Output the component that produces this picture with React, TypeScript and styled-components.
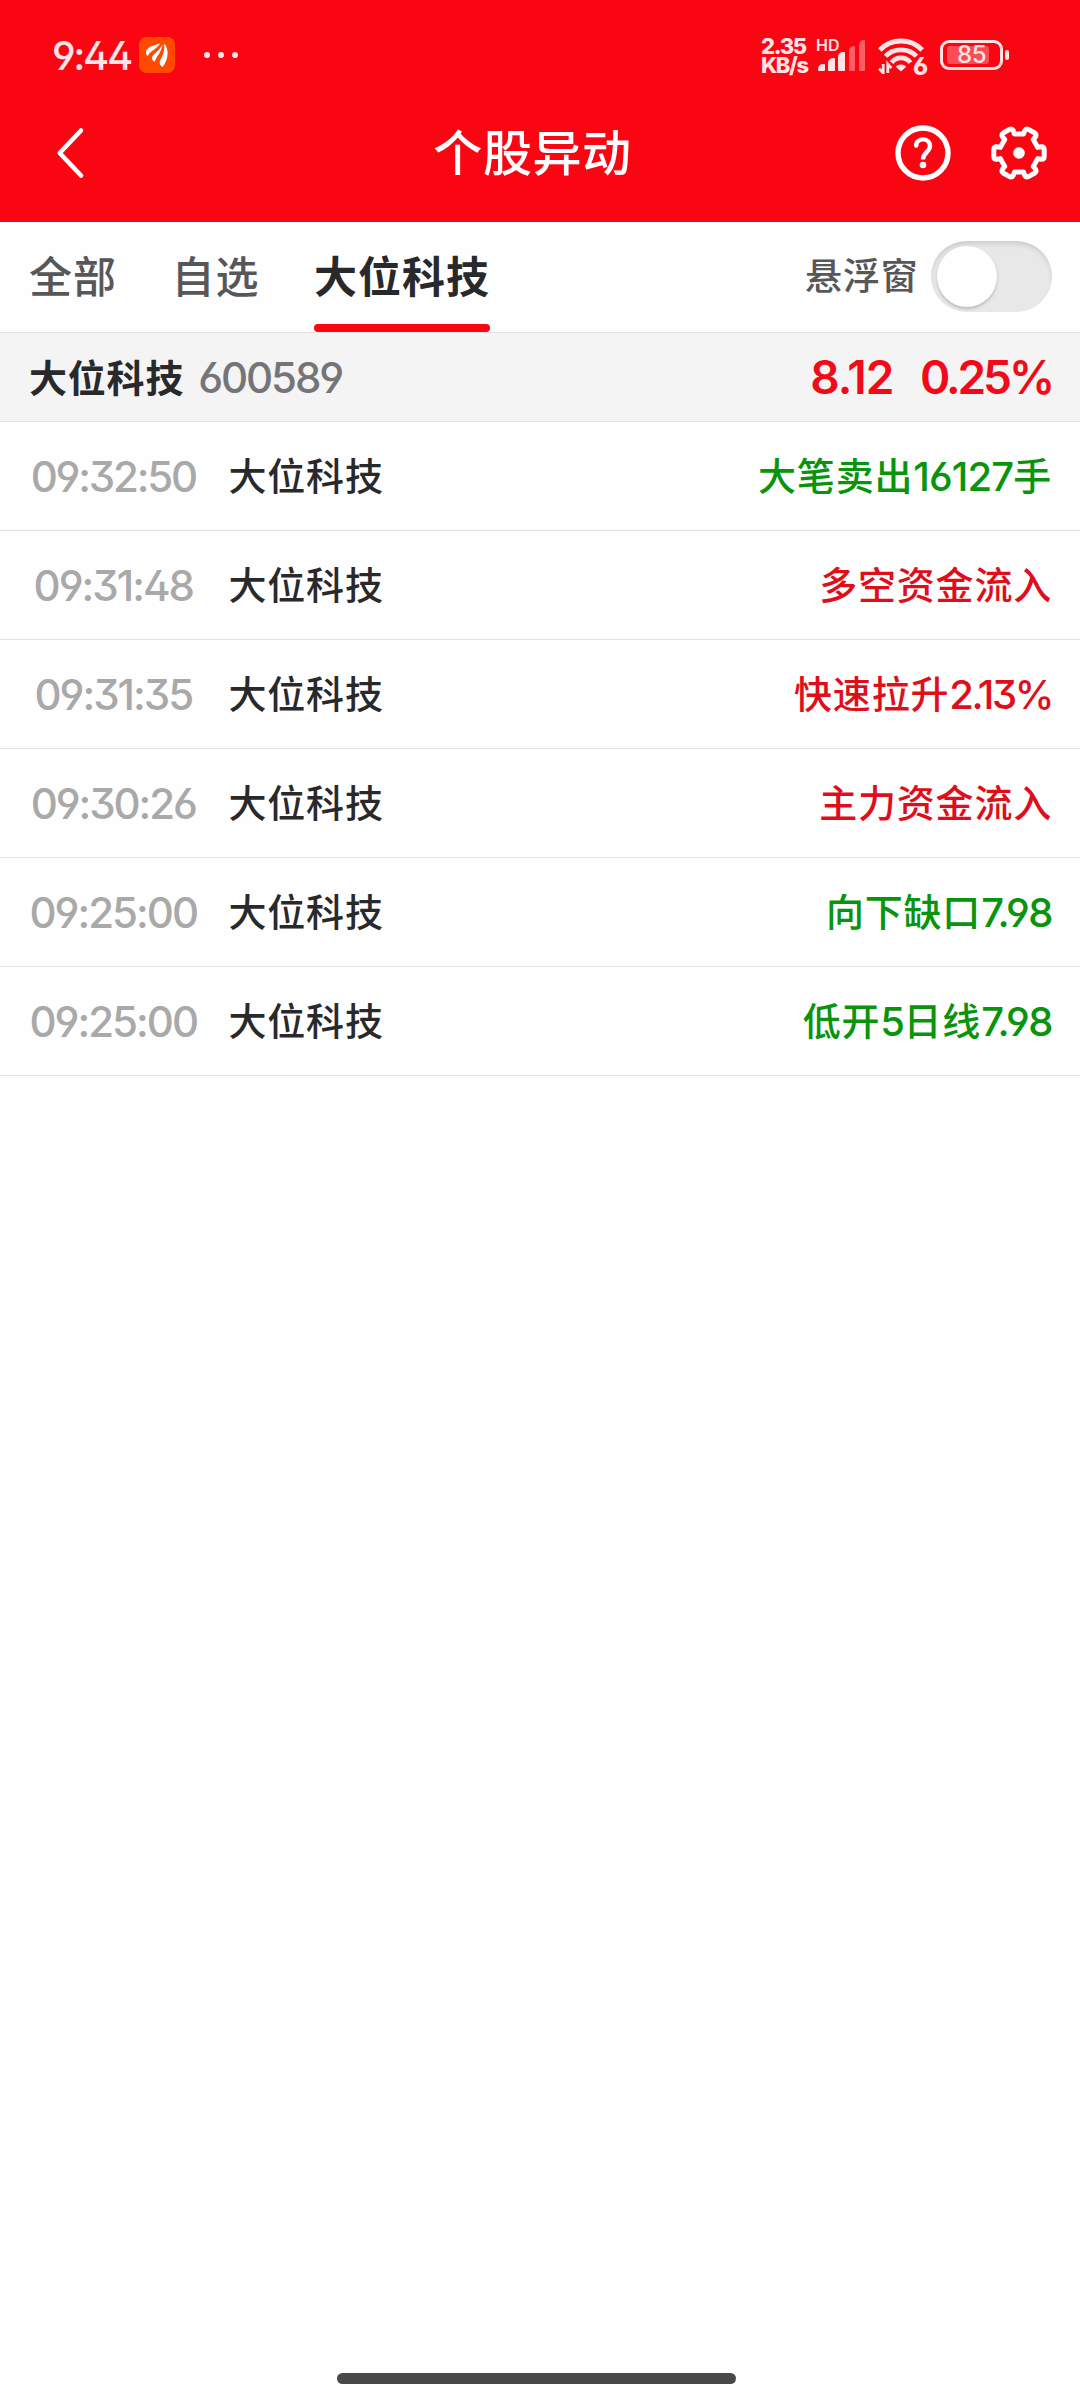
import React from "react";
import styled, { createGlobalStyle } from "styled-components";

const GlobalStyle = createGlobalStyle`
  * { box-sizing: border-box; }
  body {
    margin: 0;
    background: #fefefe;
    font-family: "Noto Sans CJK SC", "Inter", sans-serif;
  }
`;

const RED = "#fa0612";

const Screen = styled.div`
  width: 1080px;
  height: 2400px;
  display: flex;
  flex-direction: column;
  background: #fefefe;
  overflow: hidden;
`;

const StatusBar = styled.div`
  height: 84px;
  flex: none;
  padding: 27px 71px 0 52px;
  display: flex;
  align-items: flex-start;
  background: ${RED};
  color: #ffe3e5;
`;

const Digits = styled.span<{ $size: number; $weight?: number; $track?: number; $color?: string }>`
  font-family: "Inter", "Noto Sans", sans-serif;
  font-feature-settings: "cv03", "cv04", "ss01", "calt" 0;
  font-size: ${(p) => p.$size}px;
  font-weight: ${(p) => p.$weight ?? 400};
  letter-spacing: ${(p) => p.$track ?? 0}px;
  line-height: 1;
  white-space: nowrap;
  color: ${(p) => p.$color ?? "inherit"};
`;

const InlineDigits = styled(Digits)`
  vertical-align: -1px;
`;

const Clock = styled.div`
  width: 87px;
  height: 57px;
  display: flex;
  align-items: center;
`;

const StatusIcon = styled.svg`
  display: block;
  flex: none;
`;

const BadgeIcon = styled(StatusIcon)`
  margin-top: 10px;
`;

const DotsIcon = styled(StatusIcon)`
  margin: 24px 0 0 28px;
`;

const Spacer = styled.div`
  flex: 1;
`;

const Speed = styled.div`
  width: 55px;
  padding-top: 10px;
  display: flex;
  flex-direction: column;
  font-family: "Inter", sans-serif;
  font-weight: 800;
  font-size: 22px;
  line-height: 19px;
  white-space: nowrap;
`;

const SpeedLine = styled.span<{ $track: number }>`
  letter-spacing: ${(p) => p.$track}px;
`;

const Signal = styled.div`
  width: 62px;
  height: 56px;
  padding-top: 11px;
  display: flex;
  flex-direction: column;
  font-family: "Inter", sans-serif;
  font-size: 16px;
  font-weight: 600;
  line-height: 14px;
`;

const Bars = styled.div`
  display: flex;
  align-items: flex-end;
  gap: 3.6px;
  height: 31px;
  margin: -12px 0 0 2px;
`;

const Bar = styled.i<{ $h: number; $dim?: boolean }>`
  width: 6.6px;
  height: ${(p) => p.$h}px;
  border-radius: 5px 1px 1px 1px;
  background: #ffe3e5;
  opacity: ${(p) => (p.$dim ? 0.4 : 1)};
`;

const Wifi = styled.div`
  width: 62px;
  height: 56px;
  padding-top: 10px;
  display: flex;
  align-items: flex-start;
`;

const WifiGen = styled.span`
  margin: 18px 0 0 -12px;
  font-family: "Inter", sans-serif;
  font-feature-settings: "cv03", "ss01";
  font-size: 24px;
  font-weight: 800;
  line-height: 24px;
`;

const Battery = styled.div`
  margin-top: 13px;
  display: flex;
  align-items: center;
  gap: 2px;
`;

const BatteryShell = styled.div`
  width: 63px;
  height: 30px;
  padding: 3px 4px;
  border: 3px solid #ffe3e5;
  border-radius: 9px;
`;

const BatteryFill = styled.div`
  width: 42px;
  height: 18px;
  border-radius: 3px;
  background: rgba(255, 255, 255, 0.28);
  display: flex;
  align-items: center;
  justify-content: flex-end;
  padding-right: 3px;
`;

const BatteryTip = styled.div`
  width: 4px;
  height: 10px;
  border-radius: 2px;
  background: #ffe3e5;
`;

const NavBar = styled.header`
  height: 138px;
  flex: none;
  padding: 0 31px 0 55px;
  display: grid;
  grid-template-columns: 120px 1fr 154px;
  align-items: center;
  background: ${RED};
`;

const Title = styled.h1`
  margin: 0;
  padding: 0 5px 6px 0;
  text-align: center;
  color: #fff;
  font-size: 49px;
  font-weight: 500;
  line-height: 60px;
  letter-spacing: 0.6px;
`;

const NavActions = styled.div`
  display: flex;
  gap: 40px;
`;

const TabBar = styled.nav`
  height: 111px;
  flex: none;
  padding: 0 28px 0 29px;
  display: flex;
  border-bottom: 1px solid #e3e3e3;
`;

const Tab = styled.div<{ $active?: boolean }>`
  margin-right: ${(p) => (p.$active ? 0 : 54.5)}px;
  height: 110px;
  padding-top: 22px;
  display: flex;
  flex-direction: column;
  justify-content: space-between;
  font-size: 43px;
  line-height: 60px;
  letter-spacing: 1px;
  font-weight: ${(p) => (p.$active ? 700 : 500)};
  color: ${(p) => (p.$active ? "#29292b" : "#575759")};
`;

const Underline = styled.div`
  height: 8px;
  border-radius: 4px;
  background: ${RED};
`;

const FloatLabel = styled.span`
  height: 110px;
  padding-top: 24px;
  margin-right: 12.5px;
  font-size: 37px;
  font-weight: 500;
  line-height: 56px;
  letter-spacing: 0.8px;
  color: #575759;
`;

const Switch = styled.div`
  margin-top: 19px;
  width: 121px;
  height: 71px;
  padding: 5px 6px;
  border-radius: 36px;
  background: #e8e8e8;
  box-shadow: inset 0 4px 5px -1px rgba(0, 0, 0, 0.12);
`;

const Knob = styled.div`
  width: 60px;
  height: 61px;
  border-radius: 50%;
  background: #fefefe;
  box-shadow: 0 2px 3px rgba(0, 0, 0, 0.2);
`;

const Quote = styled.section`
  height: 89px;
  flex: none;
  padding: 0 28px 3px 29px;
  display: flex;
  align-items: center;
  background: #f4f4f4;
  border-bottom: 1px solid #e3e3e3;
`;

const StockName = styled.span<{ $bold?: boolean }>`
  font-size: 38px;
  line-height: 56px;
  letter-spacing: 0.8px;
  font-weight: ${(p) => (p.$bold ? 700 : 500)};
  color: #29292b;
`;

const Code = styled.div`
  margin: 4px 0 0 14px;
  flex: 1;
`;

const Price = styled.div`
  margin-top: 3px;
  display: flex;
  gap: 26.5px;
`;

const Row = styled.div`
  height: 109px;
  flex: none;
  padding: 0 28px 5px 0;
  display: flex;
  align-items: center;
  border-bottom: 1px solid #e3e3e3;
`;

const Time = styled.div`
  width: 228.5px;
  padding: 7px 2px 0 0;
  display: flex;
  justify-content: center;
`;

const Event = styled.div<{ $up: boolean }>`
  flex: 1;
  text-align: right;
  font-size: 38px;
  line-height: 56px;
  letter-spacing: 0.8px;
  font-weight: 500;
  white-space: nowrap;
  color: ${(p) => (p.$up ? "#df0e1a" : "#08940b")};
`;

const HomeBar = styled.div`
  width: 399px;
  height: 11px;
  margin: auto auto 16px 337px;
  border-radius: 6px;
  background: #484848;
`;

const AppBadge = () => (
  <BadgeIcon width="36" height="36" viewBox="0 0 36 36">
    <rect width="36" height="36" rx="7.5" fill="#ff4a00" />
    <g fill="#fff">
      <path d="M21 6.5C14 8 7 11 7 15C7 17 7.5 18.5 9 19C10 14.5 17 13 21 6.5Z" />
      <path d="M23.5 7C21 14 13 17 13 21C13 23 14.5 24.5 16 24.5C17 19 23 15.5 23.5 7Z" />
      <path d="M25 6.5C31 12 29 24 23.5 30C21 28.5 20.2 26 21 23.5C24 19 26 13 25 6.5Z" />
    </g>
  </BadgeIcon>
);

const Dots = () => (
  <DotsIcon width="36" height="8" viewBox="0 0 36 8" fill="#ffe3e5">
    <circle cx="4" cy="4" r="3" />
    <circle cx="18" cy="4" r="3" />
    <circle cx="32" cy="4" r="3" />
  </DotsIcon>
);

const WifiGlyph = () => (
  <StatusIcon width="47" height="37" viewBox="0 0 47 37" fill="none" stroke="#ffe3e5">
    <path d="M1.8 13C13 0.9 33 0.9 44.2 13" strokeWidth="5" />
    <path d="M7.6 19.3C15 10.6 31 10.6 38.4 19.3" strokeWidth="4.8" />
    <path d="M13.6 25.6C18 19.4 28 19.4 32.4 25.6" strokeWidth="4.8" />
    <path d="M23 34.6L17.8 29.8C20 26.8 26 26.8 28.2 29.8Z" fill="#ffe3e5" stroke="none" />
    <path d="M5.2 27V36L1 31.6M9.8 36V27L13.4 31.2" strokeWidth="2.8" />
  </StatusIcon>
);

const BackIcon = () => (
  <svg width="30" height="54" viewBox="0 0 30 54" fill="none" stroke="#fff" strokeWidth="4.6" strokeLinecap="round" strokeLinejoin="round">
    <path d="M26 4.5L4.7 27L26 49.5" />
  </svg>
);

const HelpIcon = () => (
  <svg width="56" height="56" viewBox="0 0 56 56" fill="none" stroke="#fff" strokeLinecap="round">
    <circle cx="28" cy="28" r="25" strokeWidth="5.4" />
    <path d="M21.2 20.5C21.2 12.3 35 12.3 35 21C35 27 28 27.5 28 34.5" strokeWidth="4.4" strokeLinecap="butt" />
    <circle cx="21.2" cy="20.5" r="2.2" fill="#fff" stroke="none" />
    <circle cx="28" cy="40" r="3.3" fill="#fff" stroke="none" />
  </svg>
);

/* One tooth of the gear pointing right, repeated every 60 degrees. */
const TOOTH: [string, number[][]][] = [
  ["L", [[18.8, -5.6]]],
  ["L", [[22.3, -6.2]]],
  ["Q", [[25.2, -6.2], [25.2, -3.2]]],
  ["L", [[25.2, 3.2]]],
  ["Q", [[25.2, 6.2], [22.3, 6.2]]],
  ["L", [[18.8, 5.6]]],
];

const gearPath = () => {
  let d = "";
  for (let k = 0; k < 6; k++) {
    const c = Math.cos((k * Math.PI) / 3);
    const s = Math.sin((k * Math.PI) / 3);
    for (const [cmd, pts] of TOOTH) {
      const at = pts.map(([x, y]) => `${(28 + x * c - y * s).toFixed(2)} ${(28 + x * s + y * c).toFixed(2)}`);
      d += (d ? cmd : "M") + at.join(" ");
    }
  }
  return d + "Z";
};

const GearIcon = () => (
  <svg width="56" height="56" viewBox="0 0 56 56" fill="none" stroke="#fff" strokeWidth="5" strokeLinejoin="round">
    <path d={gearPath()} />
    <circle cx="28" cy="28" r="5.8" fill="#fff" stroke="none" />
  </svg>
);

type Part = { n: string; track?: number } | string;
const rows: { time: string; track: number; up: boolean; parts: Part[] }[] = [
  { time: "09:32:50", track: -2.2, up: false, parts: ["大笔卖出", { n: "16127", track: -0.9 }, "手"] },
  { time: "09:31:48", track: -2, up: true, parts: ["多空资金流入"] },
  { time: "09:31:35", track: -2, up: true, parts: ["快速拉升", { n: "2.13%", track: -2.4 }] },
  { time: "09:30:26", track: -2.1, up: true, parts: ["主力资金流入"] },
  { time: "09:25:00", track: -2, up: false, parts: ["向下缺口", { n: "7.98" }] },
  { time: "09:25:00", track: -2, up: false, parts: ["低开", { n: "5" }, "日线", { n: "7.98" }] },
];

export default function App() {
  return (
    <Screen>
      <GlobalStyle />
      <StatusBar>
        <Clock>
          <Digits $size={40} $weight={500} $track={-2.4}>9:44</Digits>
        </Clock>
        <AppBadge />
        <Dots />
        <Spacer />
        <Speed>
          <SpeedLine $track={-1.3}>2.35</SpeedLine>
          <SpeedLine $track={-1.4}>KB/s</SpeedLine>
        </Speed>
        <Signal>
          <span>HD</span>
          <Bars>
            <Bar $h={7} />
            <Bar $h={13} />
            <Bar $h={19} />
            <Bar $h={25} $dim />
            <Bar $h={31} $dim />
          </Bars>
        </Signal>
        <Wifi>
          <WifiGlyph />
          <WifiGen>6</WifiGen>
        </Wifi>
        <Battery>
          <BatteryShell>
            <BatteryFill>
              <Digits $size={24} $weight={500} $track={-0.5}>85</Digits>
            </BatteryFill>
          </BatteryShell>
          <BatteryTip />
        </Battery>
      </StatusBar>
      <NavBar>
        <BackIcon />
        <Title>个股异动</Title>
        <NavActions>
          <HelpIcon />
          <GearIcon />
        </NavActions>
      </NavBar>
      <TabBar>
        <Tab>全部</Tab>
        <Tab>自选</Tab>
        <Tab $active>
          大位科技
          <Underline />
        </Tab>
        <Spacer />
        <FloatLabel>悬浮窗</FloatLabel>
        <Switch>
          <Knob />
        </Switch>
      </TabBar>
      <Quote>
        <StockName $bold>大位科技</StockName>
        <Code>
          <Digits $size={42} $weight={450} $track={-2.1} $color="#757577">600589</Digits>
        </Code>
        <Price>
          <Digits $size={46} $weight={600} $track={-1} $color="#f20a18">8.12</Digits>
          <Digits $size={46} $weight={600} $track={-3.1} $color="#f20a18">0.25%</Digits>
        </Price>
      </Quote>
      {rows.map((row, i) => (
        <Row key={i}>
          <Time>
            <Digits $size={42} $weight={450} $track={row.track} $color="#a9a9a9">{row.time}</Digits>
          </Time>
          <StockName>大位科技</StockName>
          <Event $up={row.up}>
            {row.parts.map((part, j) =>
              typeof part === "string" ? (
                <span key={j}>{part}</span>
              ) : (
                <InlineDigits key={j} $size={40} $weight={500} $track={part.track ?? -1.5}>{part.n}</InlineDigits>
              ),
            )}
          </Event>
        </Row>
      ))}
      <HomeBar />
    </Screen>
  );
}
